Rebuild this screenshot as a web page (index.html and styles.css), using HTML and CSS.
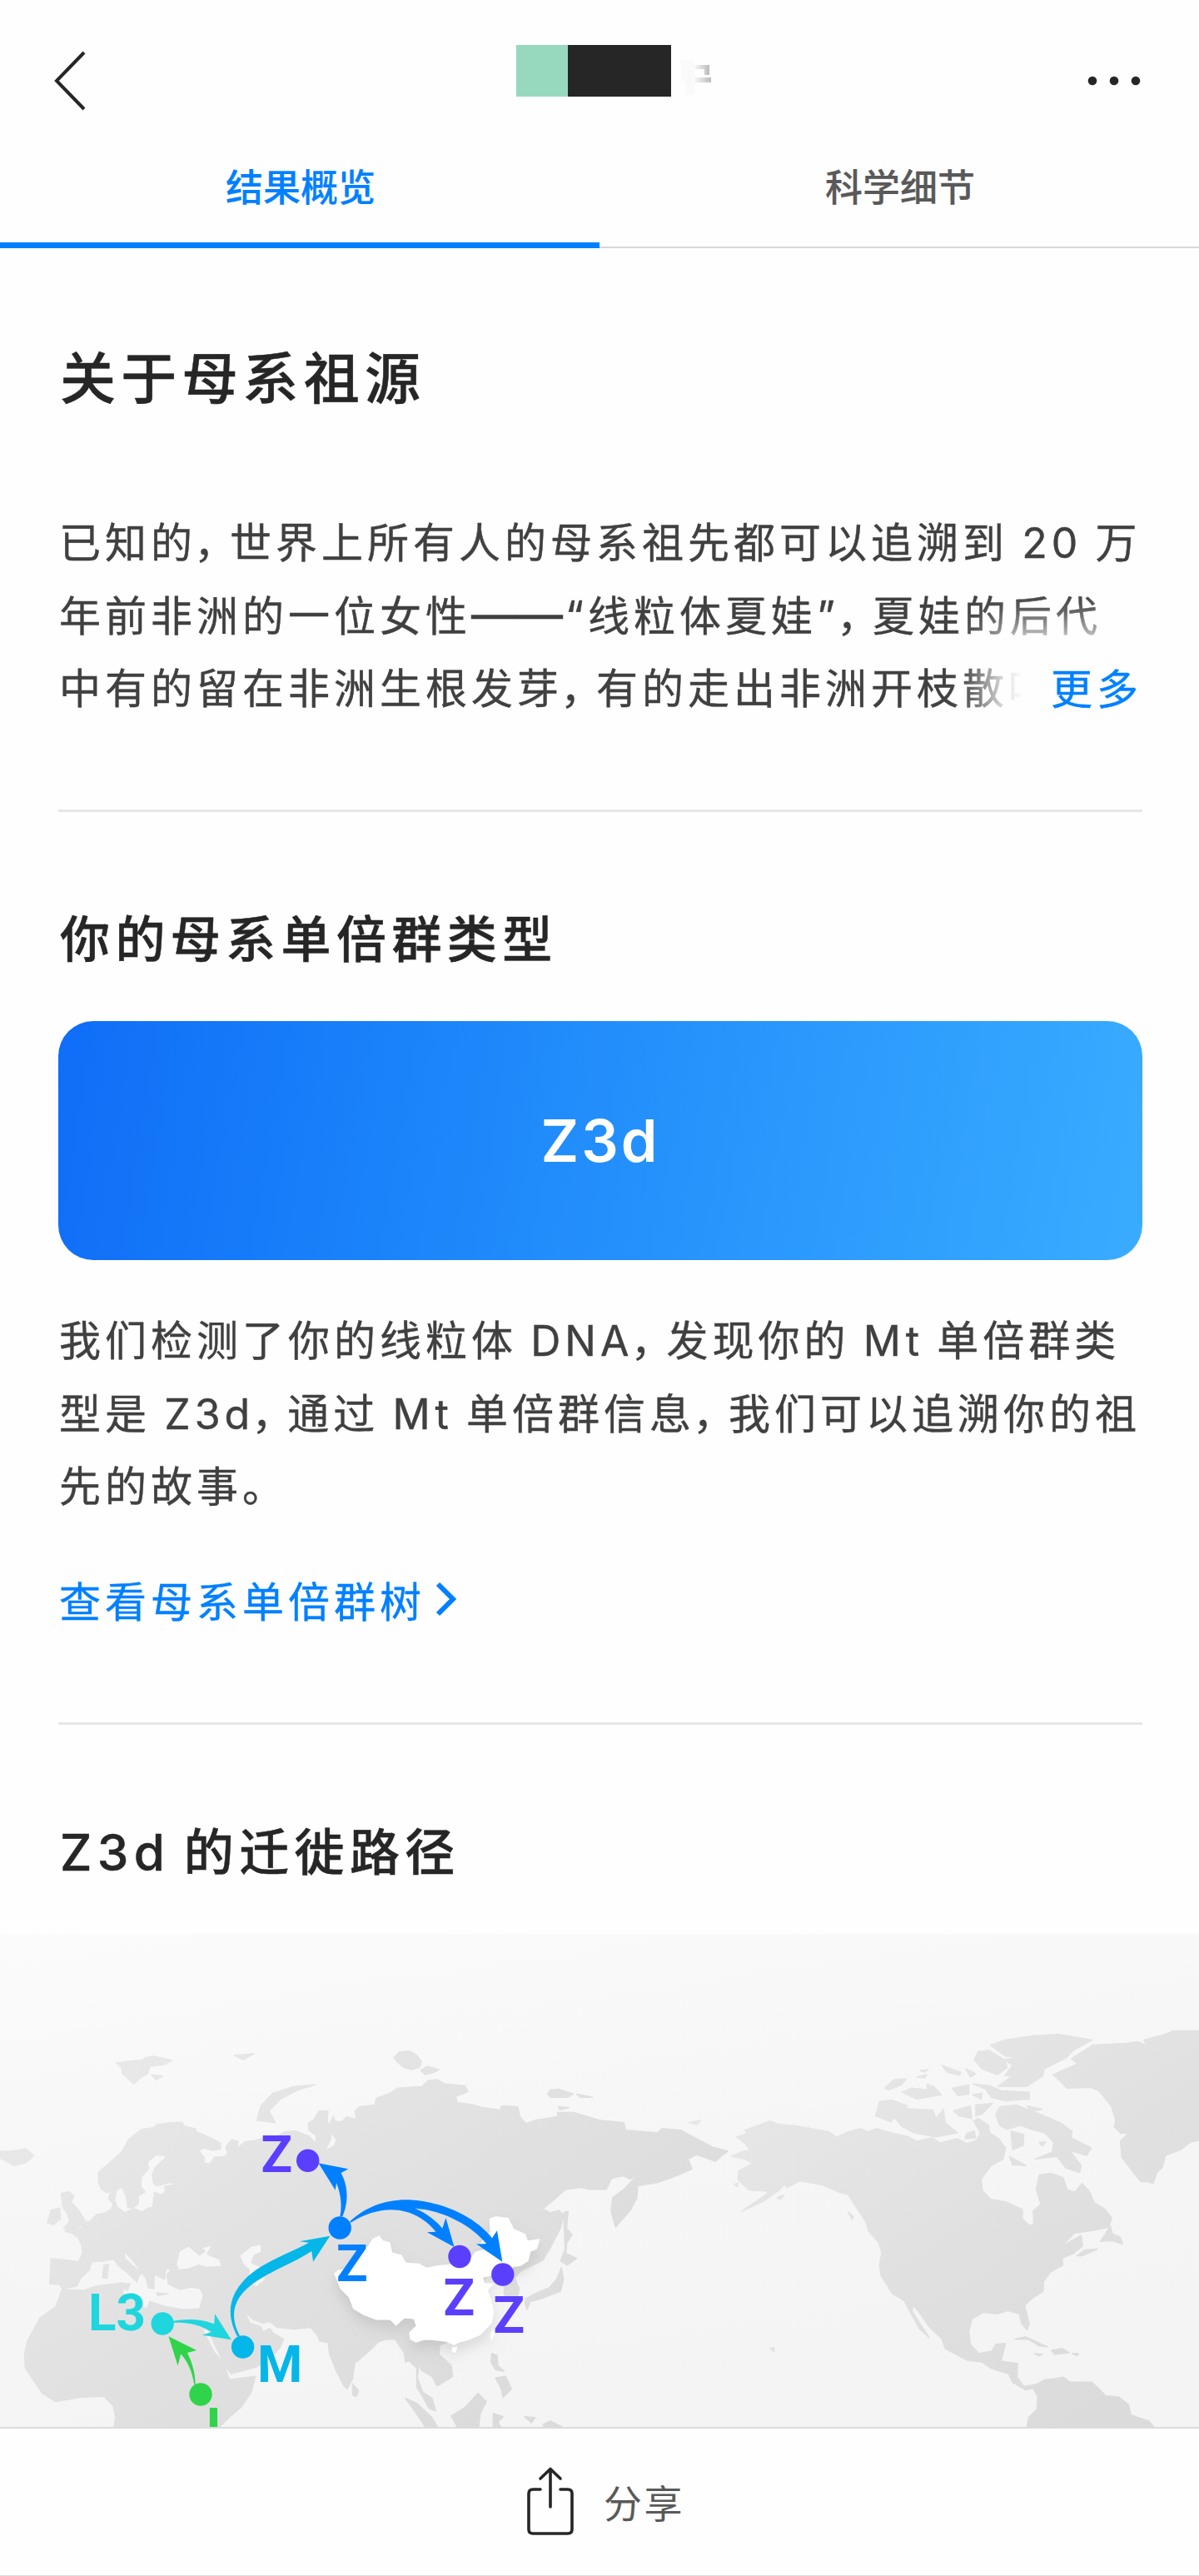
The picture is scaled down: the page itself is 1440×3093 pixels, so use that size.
FILE: index.html
```html
<!DOCTYPE html>
<html lang="zh-CN">
<head>
    <meta charset="UTF-8">
    <meta name="viewport" content="width=device-width, initial-scale=1.0">
    <title>母系祖源</title>
    <link rel="stylesheet" href="styles.css">
</head>
<body>
    <div class="header">
        <svg class="icon-back" width="40" height="72" viewBox="0 0 40 72"><path d="M37 2 L4 36 L37 70"/></svg>
        <div class="title">
            <span class="mask-green"></span>
            <span class="mask-dark"></span>
            <svg class="mask-rest" width="40" height="54" viewBox="0 0 40 54">
                <defs>
                    <linearGradient id="rest"><stop offset="0" stop-color="#fff"/><stop offset="1" stop-color="#bbb"/></linearGradient>
                </defs>
                <path fill="#fafafa" d="M0 4h16v42h-10v-16h-6z"/>
                <path fill="url(#rest)" d="M14 10h20v12h-6v-7h-14z"/>
                <path fill="url(#rest)" d="M14 25h22v6h-22z"/>
            </svg>
        </div>
        <svg class="icon-more" width="64" height="12" viewBox="0 0 64 12"><circle cx="6" cy="6" r="5.3"/><circle cx="32" cy="6" r="5.3"/><circle cx="58" cy="6" r="5.3"/></svg>
    </div>
    <div class="tabs">
        <div class="tab active">结果概览</div>
        <div class="tab">科学细节</div>
    </div>

    <div class="content">
        <h1>关于母系祖源</h1>
        <div class="text about">
            <p>已知的<i>，</i>世界上所有人的母系祖先都可以追溯到 20 万</p>
            <p>年前非洲的一位女性<b>——</b>“线粒体夏娃”<i>，</i>夏娃的后代</p>
            <p>中有的留在非洲生根发芽<i>，</i>有的走出非洲开枝散叶</p>
            <a class="more">更多</a>
        </div>
        <div class="line"></div>

        <h2>你的母系单倍群类型</h2>
        <div class="card">Z3d</div>
        <div class="text result">
            <p>我们检测了你的线粒体 DNA<i>，</i>发现你的 Mt 单倍群类</p>
            <p>型是 Z3d<i>，</i>通过 Mt 单倍群信息<i>，</i>我们可以追溯你的祖</p>
            <p>先的故事。</p>
        </div>
        <a class="tree-link">查看母系单倍群树<svg width="28" height="42" viewBox="0 0 28 42"><path d="M4 3 L22 21 L4 39"/></svg></a>
        <div class="line"></div>

        <h2>Z3d 的迁徙路径</h2>
    </div>

    <svg class="map" width="1440" height="592" viewBox="0 0 1440 592">
        <defs>
            <linearGradient id="sea" x1="0" y1="0" x2="0.35" y2="1">
                <stop offset="0" stop-color="#fbfbfb"/>
                <stop offset="0.55" stop-color="#f6f6f6"/>
                <stop offset="1" stop-color="#f4f4f4"/>
            </linearGradient>
            <linearGradient id="land" gradientUnits="userSpaceOnUse" x1="500" y1="250" x2="1100" y2="1300">
                <stop offset="0" stop-color="#e8e8e8"/>
                <stop offset="0.5" stop-color="#e1e1e2"/>
                <stop offset="1" stop-color="#dbdbdb"/>
            </linearGradient>
            <filter id="shadow" x="-20%" y="-20%" width="140%" height="150%">
                <feDropShadow dx="0" dy="18" stdDeviation="16" flood-color="#888" flood-opacity="0.25"/>
            </filter>
        </defs>
        <rect width="1440" height="592" fill="url(#sea)"/>

        <g transform="translate(0 -21.2) scale(0.4592 0.5059)">
            <g class="land">
                <!-- Eurasia and Africa -->
                <path d="M133 813 L170 816 L205 820 L216 800 L214 782 L204 762 L188 752 L170 748 L180 738 L214 740 L216 728 L236 724 L252 708 L270 706 L290 696 L296 684 L284 670 L288 658 L304 653 L300 672 L306 690 L318 698 L326 704 L350 694 L372 702 L384 694 L400 690 L402 668 L404 655 L424 662 L434 650 L430 642 L466 635 L446 632 L410 640 L402 634 L398 614 L406 596 L430 576 L434 568 L408 566 L396 576 L386 582 L388 600 L370 618 L368 642 L380 654 L362 664 L362 682 L348 692 L334 692 L330 664 L318 642 L306 650 L278 656 L264 646 L257 630 L258 608 L290 582 L318 560 L336 530 L370 506 L400 502 L412 494 L446 490 L476 489 L482 498 L512 505 L514 512 L546 524 L576 538 L578 552 L556 556 L530 550 L520 558 L534 572 L534 586 L550 588 L560 572 L588 570 L596 562 L590 548 L606 530 L622 534 L622 550 L640 536 L668 532 L690 526 L726 522 L744 512 L774 510 L808 522 L828 540 L826 520 L808 508 L806 492 L822 482 L834 462 L858 462 L856 484 L864 506 L866 528 L850 556 L874 546 L880 530 L866 514 L862 494 L872 474 L876 486 L894 488 L906 476 L932 482 L928 462 L940 452 L980 448 L984 432 L1020 420 L1040 408 L1104 404 L1120 390 L1144 388 L1164 398 L1216 402 L1224 416 L1192 428 L1196 442 L1240 448 L1262 454 L1308 460 L1312 450 L1354 452 L1360 476 L1376 492 L1400 484 L1458 476 L1458 466 L1500 466 L1568 484 L1632 490 L1636 508 L1720 514 L1732 504 L1780 508 L1830 532 L1864 548 L1904 558 L1888 568 L1872 582 L1822 566 L1800 576 L1810 600 L1774 614 L1720 632 L1668 640 L1666 668 L1650 696 L1610 738 L1598 700 L1602 668 L1632 648 L1676 606 L1650 624 L1630 616 L1600 622 L1586 648 L1540 648 L1520 644 L1480 648 L1450 672 L1420 694 L1438 704 L1462 698 L1474 710 L1466 740 L1440 786 L1420 816 L1404 824 L1380 834 L1362 842 L1346 858 L1358 884 L1354 904 L1334 914 L1318 896 L1320 880 L1300 866 L1280 850 L1240 880 L1200 1000 L1150 1018 L1148 1040 L1180 1066 L1184 1092 L1150 1112 L1142 1114 L1130 1092 L1102 1078 L1096 1060 L1092 1096 L1106 1130 L1130 1144 L1140 1174 L1122 1168 L1108 1144 L1090 1118 L1090 1072 L1070 1056 L1060 1058 L1058 1038 L1034 1004 L1010 1004 L990 1010 L968 1030 L940 1052 L928 1060 L922 1098 L908 1122 L898 1112 L880 1080 L862 1040 L858 1012 L836 1008 L830 994 L812 976 L770 980 L726 976 L704 962 L688 966 L660 956 L640 938 L654 966 L682 974 L688 986 L706 978 L716 990 L742 1004 L732 1024 L706 1050 L670 1070 L604 1086 L590 1068 L564 1022 L546 984 L528 976 L560 1034 L586 1062 L600 1100 L668 1092 L658 1128 L630 1166 L604 1186 L574 1212 L298 1212 L302 1190 L296 1162 L272 1140 L254 1140 L210 1142 L146 1152 L110 1132 L66 1072 L64 1038 L72 1008 L104 954 L146 926 L162 886 L220 888 L250 878 L320 870 L322 898 L360 920 L384 932 L392 914 L430 926 L480 934 L522 932 L532 900 L524 884 L500 880 L470 886 L440 872 L436 852 L450 836 L434 838 L430 862 L404 850 L402 884 L388 882 L382 860 L368 842 L352 822 L326 796 L326 812 L350 832 L372 846 L364 852 L358 868 L330 844 L308 828 L298 814 L270 818 L240 820 L234 840 L212 858 L200 878 L164 884 L156 874 L130 872 L132 844Z"/>
                <!-- British Isles, Iceland, Svalbard -->
                <path d="M160 658 L180 654 L194 664 L186 678 L206 698 L222 722 L214 734 L166 742 L182 724 L176 706 L164 690Z"/>
                <path d="M134 698 L156 692 L158 718 L140 732 L124 728Z"/>
                <path d="M0 558 L30 558 L68 552 L88 568 L70 584 L36 592 L10 578 L0 574Z"/>
                <path d="M304 348 L340 344 L370 342 L380 336 L400 332 L450 342 L430 352 L392 356 L386 374 L366 384 L350 398 L336 386 L320 374 L318 360Z"/>
                <path d="M396 376 L426 380 L408 388Z"/>
                <path d="M612 330 L664 326 L636 341Z"/>
                <path d="M672 484 L682 450 L714 420 L770 404 L824 400 L780 412 L734 434 L704 462 L720 490Z"/>
                <path d="M1030 336 L1044 322 L1072 320 L1090 330 L1102 344 L1098 358 L1076 364 L1054 358 L1040 346Z M1100 366 L1118 356 L1148 364 L1132 372 L1112 376Z"/>
                <path d="M1432 422 L1440 412 L1460 410 L1500 422 L1484 430 L1440 430Z M1508 422 L1550 430 L1518 430Z M1460 452 L1488 454 L1464 460Z"/>
                <!-- Mediterranean islands -->
                <path d="M310 872 L340 872 L334 888 L312 880Z M272 828 L284 826 L280 860 L268 858Z M410 894 L440 896 L412 901Z"/>
                <!-- Japan, Sakhalin, Taiwan -->
                <path d="M1474 704 L1486 700 L1482 740 L1496 756 L1482 776 L1480 800 L1508 812 L1484 828 L1466 818 L1478 790Z"/>
                <path d="M1468 834 L1474 860 L1466 890 L1420 906 L1380 916 L1374 908 L1404 894 L1436 882 L1456 862Z M1372 914 L1386 918 L1378 934Z"/>
                <!-- South-east Asia -->
                <path d="M1286 1038 L1300 1042 L1302 1066 L1318 1080 L1296 1076 L1284 1058Z M1296 1096 L1322 1092 L1338 1122 L1316 1142 L1310 1120Z"/>
                <path d="M1060 1144 L1090 1156 L1130 1190 L1144 1212 L1112 1212 L1086 1176Z"/>
                <path d="M1180 1186 L1216 1166 L1250 1132 L1272 1152 L1256 1180 L1252 1212 L1196 1212Z"/>
                <path d="M1290 1180 L1316 1188 L1302 1200 L1310 1212 L1290 1212Z M1372 1188 L1400 1190 L1390 1202Z M1420 1206 L1440 1198 L1470 1212 L1424 1212Z"/>
                <path d="M922 1110 L938 1126 L932 1140 L922 1136Z"/>
            </g>

            <!-- inland seas -->
            <path class="water" d="M470 796 L494 784 L510 798 L522 806 L538 796 L530 788 L552 782 L540 802 L574 816 L578 830 L540 832 L520 826 L492 836 L468 838 L462 826Z"/>
            <path class="water" d="M628 806 L658 784 L682 780 L682 796 L664 804 L656 822 L690 838 L692 862 L670 878 L648 866 L654 840 L638 826Z"/>

            <g class="land" transform="translate(1568)">
                <!-- North America -->
                <path d="M358 524 L386 516 L380 508 L416 496 L446 486 L470 494 L520 498 L600 512 L620 524 L650 512 L684 504 L700 512 L724 504 L770 516 L804 522 L830 534 L870 526 L890 538 L936 528 L960 540 L986 532 L996 514 L978 486 L990 480 L1018 496 L1020 514 L1044 528 L1062 550 L1056 576 L1024 592 L998 624 L1002 652 L1024 672 L1062 678 L1106 696 L1106 718 L1124 734 L1136 730 L1134 700 L1154 684 L1142 648 L1150 614 L1180 610 L1212 620 L1224 650 L1244 654 L1262 634 L1282 654 L1294 680 L1320 694 L1340 716 L1332 738 L1288 746 L1242 752 L1208 784 L1260 758 L1264 782 L1240 800 L1210 812 L1212 828 L1180 844 L1162 866 L1160 890 L1130 908 L1112 924 L1124 968 L1118 982 L1104 966 L1098 944 L1068 936 L1040 944 L1004 940 L974 956 L966 986 L970 1016 L992 1038 L1026 1032 L1036 1016 L1062 1014 L1050 1056 L1094 1062 L1092 1094 L1110 1116 L1140 1112 L1166 1100 L1190 1098 L1214 1094 L1230 1106 L1288 1106 L1324 1138 L1360 1142 L1384 1160 L1390 1184 L1436 1198 L1450 1212 L1118 1212 L1122 1190 L1144 1170 L1146 1140 L1134 1120 L1114 1124 L1080 1106 L1070 1086 L1026 1074 L1000 1058 L962 1054 L904 1026 L896 1004 L862 974 L834 938 L820 924 L818 938 L862 1000 L836 978 L796 912 L766 896 L736 852 L732 828 L738 800 L730 774 L704 748 L696 724 L678 700 L650 660 L630 656 L584 638 L524 628 L490 644 L484 636 L470 650 L430 676 L372 700 L440 658 L438 652 L392 650 L362 626 L364 604 L402 586 L380 576 L344 570 L374 558 L394 556 L382 540Z"/>
                <!-- Arctic islands -->
                <path d="M1022 306 L1060 294 L1132 284 L1200 280 L1288 294 L1240 318 L1220 336 L1164 362 L1160 378 L1118 404 L1042 404 L1078 380 L1060 378 L1080 354 L1060 340 L1100 334 L1062 332Z"/>
                <path d="M980 340 L990 322 L1018 318 L1062 342 L1066 360 L1040 376 L1000 362Z"/>
                <path d="M976 398 L1020 402 L1050 414 L1124 418 L1124 434 L1062 438 L1024 430 L1010 410Z"/>
                <path d="M922 408 L966 400 L966 422 L938 426Z M976 424 L1000 420 L998 434Z M958 362 L984 374 L970 382Z M896 354 L944 370 L942 378 L908 370Z"/>
                <path d="M746 408 L770 388 L802 386 L790 400 L756 412Z M792 418 L816 408 L858 412 L856 398 L874 404 L894 424 L830 434Z M830 382 L856 376 L850 384Z M838 366 L860 364 L850 370Z"/>
                <path d="M722 474 L732 440 L764 436 L806 450 L780 468 L762 488Z"/>
                <path d="M772 478 L800 456 L826 458 L872 460 L880 480 L900 458 L904 490 L936 514 L880 524 L822 514 L790 498Z"/>
                <path d="M926 462 L970 450 L974 480 L940 474Z M984 448 L1028 444 L1000 470 L984 474Z M960 516 L980 510 L984 526 L956 528Z"/>
                <path d="M1036 470 L1048 452 L1090 448 L1130 462 L1164 474 L1204 490 L1236 510 L1234 526 L1286 550 L1274 568 L1230 556 L1260 592 L1256 608 L1220 598 L1196 570 L1140 576 L1184 560 L1188 536 L1164 514 L1130 506 L1100 496 L1066 506 L1046 496Z"/>
                <path d="M1076 510 L1110 518 L1108 544 L1080 554Z M1072 570 L1116 592 L1080 590Z M1150 536 L1168 536 L1158 546Z M1118 450 L1158 458 L1130 464Z"/>
                <!-- Greenland -->
                <path d="M1186 376 L1226 360 L1250 350 L1234 338 L1290 306 L1376 302 L1408 298 L1430 306 L1424 294 L1480 280 L1500 272 L1568 272 L1568 532 L1546 536 L1520 554 L1480 568 L1472 596 L1458 608 L1448 634 L1432 630 L1416 630 L1396 608 L1366 572 L1362 534 L1384 514 L1364 516 L1346 500 L1350 484 L1338 450 L1306 414 L1284 406 L1222 408 L1206 392Z"/>
                <!-- Newfoundland, Nova Scotia, Caribbean -->
                <path d="M1336 736 L1342 754 L1362 762 L1368 778 L1340 770 L1310 772Z M1248 806 L1270 792 L1302 790 L1262 806Z"/>
                <path d="M1086 1004 L1114 998 L1172 1022 L1150 1020 L1122 1004Z M1182 1030 L1210 1026 L1228 1036 L1190 1040Z M1138 1038 L1158 1040 L1148 1043Z M1236 1038 L1252 1038 L1250 1043Z"/>
                <path d="M234 490 L264 484 L256 494Z M352 636 L362 634 L360 642Z M464 668 L482 662 L474 672Z M650 702 L664 712 L660 720Z M446 1026 L456 1024 L456 1033Z"/>
            </g>

            <!-- China -->
            <path class="china" filter="url(#shadow)" d="M874 848 L884 840 L900 838 L928 818 L940 790 L962 784 L974 766 L992 758 L1002 770 L1020 774 L1026 798 L1050 804 L1062 822 L1096 824 L1116 834 L1150 828 L1180 826 L1230 812 L1244 796 L1272 790 L1250 784 L1264 768 L1282 748 L1280 718 L1296 712 L1330 716 L1344 742 L1374 754 L1380 770 L1412 766 L1404 790 L1388 796 L1382 818 L1362 830 L1344 832 L1320 850 L1290 852 L1264 858 L1266 870 L1292 872 L1276 888 L1284 908 L1292 940 L1286 966 L1256 994 L1226 1006 L1200 1012 L1188 1018 L1166 1010 L1130 1006 L1108 1006 L1088 1012 L1072 1004 L1070 988 L1088 972 L1082 956 L1058 954 L1036 972 L1020 958 L984 958 L950 946 L924 932 L912 904 L890 884Z M1182 1024 L1196 1022 L1192 1036 L1182 1034Z M1290 980 L1294 990 L1286 1008 L1282 994Z"/>

            <!-- routes -->
            <path fill="#2fd44a" d="M508 1112 C503 1080 490 1055 473 1039 L465 1067 L441 997 L514 1030 L490 1036 C503 1060 511 1085 511 1112Z"/>
            <path fill="#1fd6de" d="M450 961 C490 954 530 956 560 968 L562 944 L605 1005 L529 994 L553 987 C525 970 490 963 450 965Z"/>
            <path fill="#04b7e8" d="M621 998 C590 945 600 900 640 862 C690 818 760 800 808 775 L784 772 L863 759 L819 820 L815 795 C760 828 680 850 637 892 C605 925 606 960 627 996Z"/>
            <path fill="#0080ff" d="M889 714 C895 690 892 660 880 633 L877 650 L833 586 L911 600 L892 609 C913 645 910 682 896 712Z"/>
            <path fill="#0080ff" d="M914 726 C955 688 1015 671 1070 673 C1160 677 1245 715 1287 764 L1300 746 L1314 820 L1246 778 L1272 777 C1225 727 1150 698 1085 693 C1110 702 1140 721 1157 741 L1166 716 L1188 785 L1117 750 L1140 749 C1085 688 1000 680 918 727Z"/>
        </g>

        <g class="pins">
            <circle cx="241" cy="553" r="13.7" fill="#2fd44a"/>
            <circle cx="195.2" cy="468" r="13.7" fill="#1fd6de"/>
            <circle cx="291.6" cy="496" r="13.7" fill="#04b7e8"/>
            <circle cx="408.2" cy="353" r="13.7" fill="#0080ff"/>
            <circle cx="369.7" cy="272.3" r="13.7" fill="#5b3fff"/>
            <circle cx="552" cy="387.5" r="13.7" fill="#5b3fff"/>
            <circle cx="603.8" cy="409" r="13.7" fill="#5b3fff"/>
            <text x="248" y="613" fill="#2fd44a">L</text>
            <text x="106" y="476" fill="#1fd6de">L3</text>
            <text x="309" y="538" fill="#04b7e8">M</text>
            <text x="404" y="416.5" fill="#0080ff">Z</text>
            <text x="313.5" y="286" fill="#5b3fff">Z</text>
            <text x="532.5" y="458" fill="#5b3fff">Z</text>
            <text x="592.5" y="479" fill="#5b3fff">Z</text>
        </g>
    </svg>

    <div class="footer">
        <svg width="56" height="82" viewBox="0 0 56 82"><path d="M16 27 H7 Q2 27 2 32 V75 Q2 80 7 80 H49 Q54 80 54 75 V32 Q54 27 49 27 H40 M28 48 V3 M16 14 L28 2.5 L40 14"/></svg>
        <span>分享</span>
    </div>
</body>
</html>
```
FILE: styles.css
```css
*{
    box-sizing:border-box;
}
body{
    margin:0;
    width:1440px;
    background:#fefefe;
    color:#262626;
    font-family:Inter,"Noto Sans CJK SC",sans-serif;
}
h1,h2,p{
    margin:0;
    font-weight:500;
}
/* header */
.header{
    display:flex;
    align-items:center;
    justify-content:space-between;
    height:193px;
    padding:0 70px 0 64px;
}
.icon-back,.tree-link svg,.footer svg{
    fill:none;
    stroke:#262626;
    stroke-width:4;
}
.icon-more{
    fill:#262626;
}
.title{
    display:flex;
    margin-bottom:23px;
    padding-left:68px;
}
.mask-green{
    width:62px;
    height:62px;
    background:#97d9bf;
}
.mask-dark{
    width:124px;
    height:62px;
    background:#262626;
}
.mask-rest{
    margin:14px 0 -6px 12px;
}
/* tabs */
.tabs{
    display:flex;
    height:105px;
    box-shadow:inset 0 -2px #d9d9d9;
}
.tab{
    flex:1;
    padding-left:2px;
    font-size:45px;
    font-weight:500;
    line-height:66px;
    text-align:center;
    color:#595959;
    -webkit-text-stroke:0.2px;
}
.tab.active{
    color:#0080ff;
    border-bottom:7px solid #0080ff;
}
/* content */
.content{
    padding:117px 68px 63px 70px;
}
h1,h2{
    padding-left:2px;
    -webkit-text-stroke:0.5px;
}
h1{
    font-size:67px;
    line-height:80px;
    letter-spacing:6.2px;
}
h2{
    font-size:60px;
    line-height:70px;
    letter-spacing:6.4px;
    word-spacing:-6px;
}
.line{
    height:3px;
    background:#e6e6e6;
}
.text{
    font-size:50px;
    line-height:87.5px;
    letter-spacing:5px;
    word-spacing:-2.8px;
    color:#404040;
    -webkit-text-stroke:0.4px;
}
.text p{
    padding-left:1px;
    font-weight:400;
    white-space:nowrap;
}
/* half-width comma */
.text i{
    font-style:normal;
    font-feature-settings:"halt";
    margin:0 13px 0 -3px;
}
/* joined dashes */
.text b{
    margin-right:3px;
    font-size:55px;
    font-weight:400;
    line-height:0;
    letter-spacing:0;
}
.about{
    position:relative;
    height:263px;
    margin:114px 0 100px;
}
.more{
    position:absolute;
    right:0;
    bottom:10px;
    padding-left:36px;
    line-height:68px;
    color:#0080ff;
    background:#fefefe;
    box-shadow:0 0 44px 40px #fefefe;
}
.line + h2{
    margin-top:118px;
}
.card{
    height:287px;
    margin-top:63px;
    border-radius:42px;
    background:linear-gradient(100deg,#0f6df7 0%,#1b84fa 33%,#39acff 100%);
    color:#fff;
    font-size:70px;
    font-weight:600;
    line-height:287px;
    letter-spacing:3px;
    text-align:center;
}
.result{
    height:263px;
    margin:54px 0 59px;
}
.tree-link{
    display:flex;
    align-items:center;
    margin-bottom:109px;
    padding-left:1px;
    font-size:50px;
    line-height:70px;
    letter-spacing:5px;
    color:#0080ff;
    -webkit-text-stroke:0.4px;
}
.tree-link svg{
    margin:0 0 8px 11px;
    stroke:#0080ff;
    stroke-width:6;
}
/* map */
.map{
    display:block;
}
.land{
    fill:url(#land);
    stroke:url(#land);
    stroke-width:3;
    stroke-linejoin:round;
}
.water{
    fill:#f6f6f6;
}
.china{
    fill:#fff;
}
.pins{
    font-family:Roboto,sans-serif;
    font-size:62px;
    font-weight:700;
}
/* footer */
.footer{
    display:flex;
    align-items:center;
    justify-content:center;
    height:180px;
    padding:0 0 3px 15px;
    border-top:2px solid #dcdcdc;
    border-bottom:2px solid #dcdcdc;
    font-size:46px;
    letter-spacing:2.5px;
    color:#595959;
}
.footer svg{
    margin-right:36px;
    stroke-width:3.6;
    stroke-linecap:round;
    stroke-linejoin:round;
}
```
